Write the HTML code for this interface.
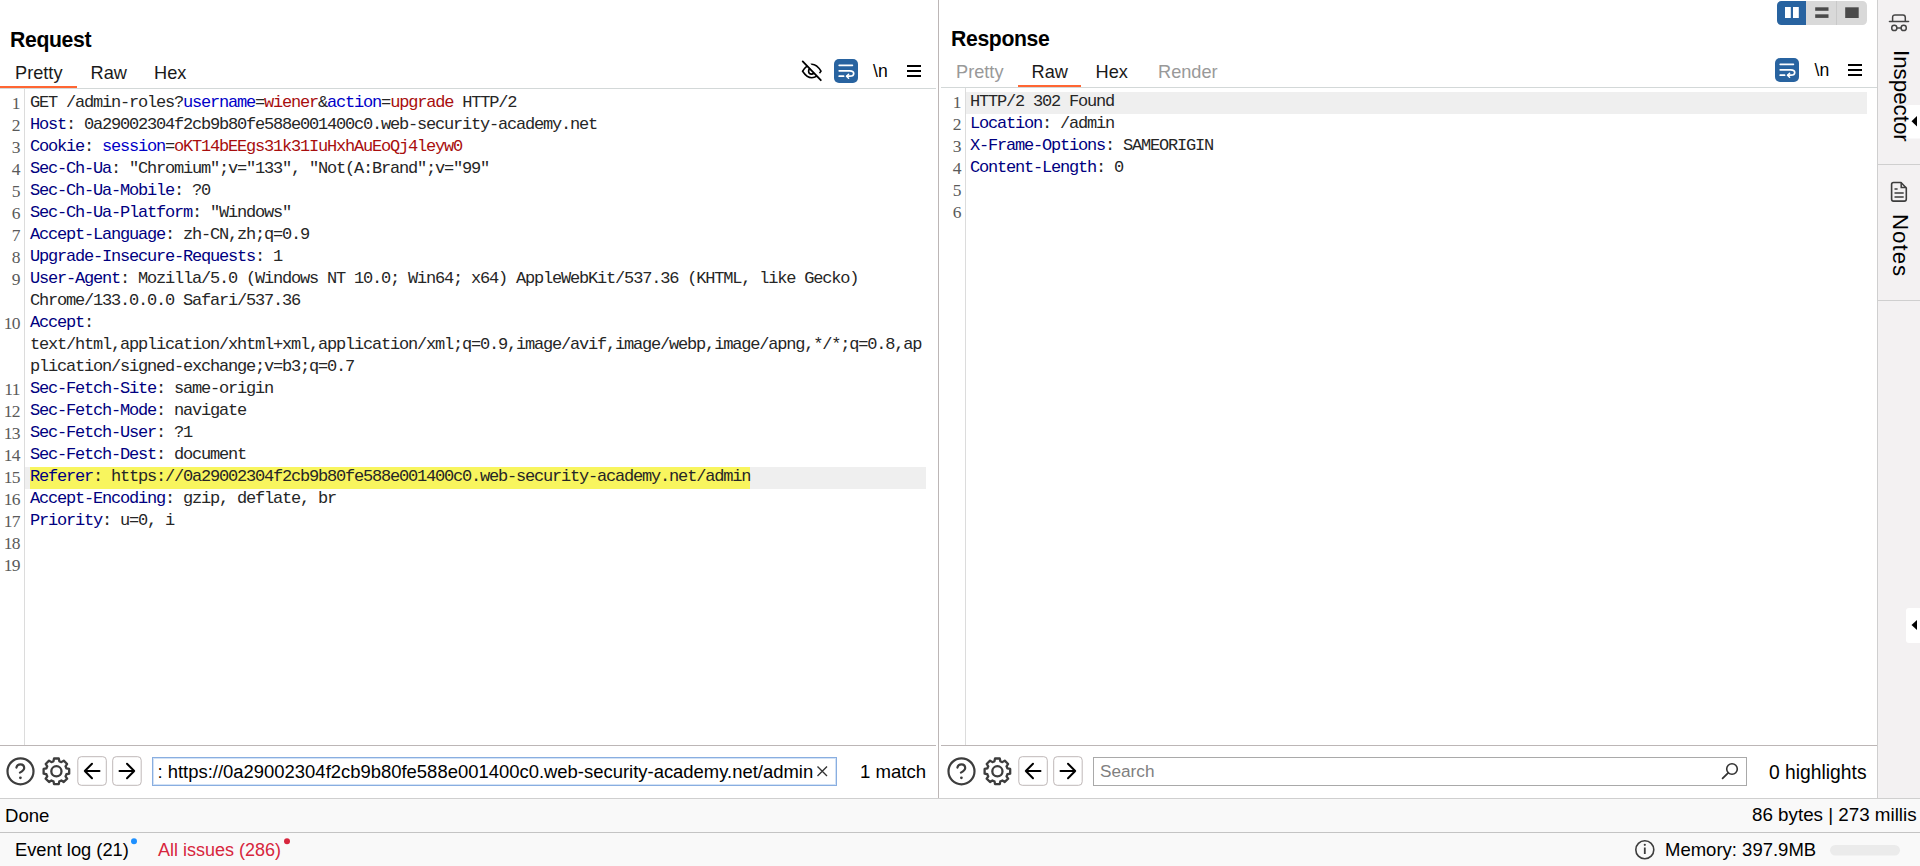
<!DOCTYPE html>
<html><head><meta charset="utf-8">
<style>
*{margin:0;padding:0;box-sizing:border-box}
html,body{width:1920px;height:866px;overflow:hidden;background:#fff;position:relative;font-family:"Liberation Sans",sans-serif;color:#000}
.a{position:absolute}
.t{position:absolute;white-space:pre;line-height:1}
.hd{font-weight:bold;font-size:21.2px;letter-spacing:-0.35px}
.tab{font-size:18.2px;color:#1a1a1a}
.tab.g{color:#999}
.code{position:absolute;font-family:"Liberation Mono",monospace;font-size:17px;letter-spacing:-1.2px;color:#262626}
.code div{height:22px;line-height:22px;white-space:pre}
.ln{position:absolute;font-family:"Liberation Serif",serif;font-size:17.5px;letter-spacing:-0.6px;color:#5a5a5a;text-align:right}
.ln div{height:22px;line-height:22px}
.h{color:#000080}
.b{color:#0000c8}
.r{color:#a80e0e}
.ui{font-size:18.6px}
</style></head><body>

<!-- LEFT PANEL -->
<div class="t hd" style="left:10px;top:29px">Request</div>
<div class="t tab" style="left:15px;top:64px">Pretty</div>
<div class="t tab" style="left:90.5px;top:64px">Raw</div>
<div class="t tab" style="left:154px;top:64px">Hex</div>
<div class="a" style="left:0;top:86px;width:77px;height:2px;background:#ff6633"></div>
<div class="a" style="left:0;top:88px;width:936px;height:1px;background:#d3d8d8"></div>
<div class="a" style="left:24px;top:89px;width:1px;height:656px;background:#dcdcdc"></div>

<!-- current line + highlight -->
<div class="a" style="left:25px;top:467px;width:901px;height:22px;background:#efefef"></div>
<div class="a" style="left:30px;top:467px;width:720px;height:22px;background:#f8f55e"></div>

<div class="ln" style="left:0;top:92px;width:20px">
<div>1</div><div>2</div><div>3</div><div>4</div><div>5</div><div>6</div><div>7</div><div>8</div><div>9</div><div></div><div>10</div><div></div><div></div><div>11</div><div>12</div><div>13</div><div>14</div><div>15</div><div>16</div><div>17</div><div>18</div><div>19</div>
</div>
<div class="code" style="left:30px;top:92px">
<div>GET /admin-roles?<span class="b">username</span>=<span class="r">wiener</span>&amp;<span class="b">action</span>=<span class="r">upgrade</span> HTTP/2</div>
<div><span class="h">Host</span>: 0a29002304f2cb9b80fe588e001400c0.web-security-academy.net</div>
<div><span class="h">Cookie</span>: <span class="b">session</span>=<span class="r">oKT14bEEgs31k31IuHxhAuEoQj4leyw0</span></div>
<div><span class="h">Sec-Ch-Ua</span>: "Chromium";v="133", "Not(A:Brand";v="99"</div>
<div><span class="h">Sec-Ch-Ua-Mobile</span>: ?0</div>
<div><span class="h">Sec-Ch-Ua-Platform</span>: "Windows"</div>
<div><span class="h">Accept-Language</span>: zh-CN,zh;q=0.9</div>
<div><span class="h">Upgrade-Insecure-Requests</span>: 1</div>
<div><span class="h">User-Agent</span>: Mozilla/5.0 (Windows NT 10.0; Win64; x64) AppleWebKit/537.36 (KHTML, like Gecko)</div>
<div>Chrome/133.0.0.0 Safari/537.36</div>
<div><span class="h">Accept</span>:</div>
<div>text/html,application/xhtml+xml,application/xml;q=0.9,image/avif,image/webp,image/apng,*/*;q=0.8,ap</div>
<div>plication/signed-exchange;v=b3;q=0.7</div>
<div><span class="h">Sec-Fetch-Site</span>: same-origin</div>
<div><span class="h">Sec-Fetch-Mode</span>: navigate</div>
<div><span class="h">Sec-Fetch-User</span>: ?1</div>
<div><span class="h">Sec-Fetch-Dest</span>: document</div>
<div><span class="h">Referer</span>: https://0a29002304f2cb9b80fe588e001400c0.web-security-academy.net/admin</div>
<div><span class="h">Accept-Encoding</span>: gzip, deflate, br</div>
<div><span class="h">Priority</span>: u=0, i</div>
</div>

<!-- divider -->
<div class="a" style="left:938px;top:0;width:1px;height:798px;background:#bcb6b6"></div>

<!-- RIGHT PANEL -->
<div class="t hd" style="left:951px;top:28px">Response</div>
<div class="t tab g" style="left:956px;top:63px">Pretty</div>
<div class="t tab" style="left:1031.5px;top:63px">Raw</div>
<div class="t tab" style="left:1095.5px;top:63px">Hex</div>
<div class="t tab g" style="left:1158px;top:63px">Render</div>
<div class="a" style="left:1018px;top:85px;width:63px;height:2px;background:#ff6633"></div>
<div class="a" style="left:941px;top:87px;width:936px;height:1px;background:#d3d8d8"></div>
<div class="a" style="left:965px;top:88px;width:1px;height:657px;background:#dcdcdc"></div>
<div class="a" style="left:966px;top:92px;width:901px;height:22px;background:#efefef"></div>

<div class="ln" style="left:941px;top:91px;width:20px">
<div>1</div><div>2</div><div>3</div><div>4</div><div>5</div><div>6</div>
</div>
<div class="code" style="left:970px;top:91px">
<div>HTTP/2 302 Found</div>
<div><span class="h">Location</span>: /admin</div>
<div><span class="h">X-Frame-Options</span>: SAMEORIGIN</div>
<div><span class="h">Content-Length</span>: 0</div>
</div>

<!-- SIDEBAR -->
<div class="a" style="left:1878px;top:0;width:42px;height:798px;background:#f3f1f2"></div>
<div class="a" style="left:1877px;top:0;width:1px;height:798px;background:#cfcfcf"></div>

<!-- BOTTOM SEARCH BARS -->
<div class="a" style="left:0;top:745px;width:936px;height:1px;background:#bcb6b6"></div>
<div class="a" style="left:941px;top:745px;width:936px;height:1px;background:#bcb6b6"></div>


<!-- bottom search bars svg -->
<svg class="a" style="left:0;top:0" width="1920" height="866" viewBox="0 0 1920 866">
<g>
<circle cx="20.5" cy="771.3" r="13" fill="none" stroke="#3d3d3d" stroke-width="2.2"/>
<path d="M16.4 767.6 C16.9 765.5 18.5 764.4 20.4 764.4 C22.6 764.4 24.2 765.9 24.2 768 C24.2 770.1 22.5 771.2 19.9 772.6" fill="none" stroke="#3d3d3d" stroke-width="2.2" stroke-linecap="round"/>
<circle cx="20.4" cy="777.8" r="1.4" fill="#3d3d3d"/>
<g transform="translate(56.4 771.3)"><path d="M-2.95 -9.97L-2.37 -12.78 L2.37 -12.78 L2.95 -9.97 A10.40 10.40 0 0 1 4.96 -9.14L7.36 -10.71 L10.71 -7.36 L9.14 -4.96 A10.40 10.40 0 0 1 9.97 -2.95L12.78 -2.37 L12.78 2.37 L9.97 2.95 A10.40 10.40 0 0 1 9.14 4.96L10.71 7.36 L7.36 10.71 L4.96 9.14 A10.40 10.40 0 0 1 2.95 9.97L2.37 12.78 L-2.37 12.78 L-2.95 9.97 A10.40 10.40 0 0 1 -4.96 9.14L-7.36 10.71 L-10.71 7.36 L-9.14 4.96 A10.40 10.40 0 0 1 -9.97 2.95L-12.78 2.37 L-12.78 -2.37 L-9.97 -2.95 A10.40 10.40 0 0 1 -9.14 -4.96L-10.71 -7.36 L-7.36 -10.71 L-4.96 -9.14 A10.40 10.40 0 0 1 -2.95 -9.97Z" fill="none" stroke="#3d3d3d" stroke-width="2.3" stroke-linejoin="round"/><circle r="5.1" fill="none" stroke="#3d3d3d" stroke-width="2.3"/></g>
<rect x="77.8" y="756.7" width="28.5" height="28.6" rx="3.5" fill="#fff" stroke="#bfb8b8" stroke-width="1"/>
<rect x="112.7" y="756.7" width="28.5" height="28.6" rx="3.5" fill="#fff" stroke="#bfb8b8" stroke-width="1"/>
<path d="M92 763.8 L84.8 771 L92 778.2 M84.8 771 H99.5" fill="none" stroke="#000" stroke-width="2" stroke-linecap="round" stroke-linejoin="round"/>
<path d="M127 763.8 L134.2 771 L127 778.2 M134.2 771 H119.5" fill="none" stroke="#000" stroke-width="2" stroke-linecap="round" stroke-linejoin="round"/>
</g>
<g transform="translate(941 0)"><g>
<circle cx="20.5" cy="771.3" r="13" fill="none" stroke="#3d3d3d" stroke-width="2.2"/>
<path d="M16.4 767.6 C16.9 765.5 18.5 764.4 20.4 764.4 C22.6 764.4 24.2 765.9 24.2 768 C24.2 770.1 22.5 771.2 19.9 772.6" fill="none" stroke="#3d3d3d" stroke-width="2.2" stroke-linecap="round"/>
<circle cx="20.4" cy="777.8" r="1.4" fill="#3d3d3d"/>
<g transform="translate(56.4 771.3)"><path d="M-2.95 -9.97L-2.37 -12.78 L2.37 -12.78 L2.95 -9.97 A10.40 10.40 0 0 1 4.96 -9.14L7.36 -10.71 L10.71 -7.36 L9.14 -4.96 A10.40 10.40 0 0 1 9.97 -2.95L12.78 -2.37 L12.78 2.37 L9.97 2.95 A10.40 10.40 0 0 1 9.14 4.96L10.71 7.36 L7.36 10.71 L4.96 9.14 A10.40 10.40 0 0 1 2.95 9.97L2.37 12.78 L-2.37 12.78 L-2.95 9.97 A10.40 10.40 0 0 1 -4.96 9.14L-7.36 10.71 L-10.71 7.36 L-9.14 4.96 A10.40 10.40 0 0 1 -9.97 2.95L-12.78 2.37 L-12.78 -2.37 L-9.97 -2.95 A10.40 10.40 0 0 1 -9.14 -4.96L-10.71 -7.36 L-7.36 -10.71 L-4.96 -9.14 A10.40 10.40 0 0 1 -2.95 -9.97Z" fill="none" stroke="#3d3d3d" stroke-width="2.3" stroke-linejoin="round"/><circle r="5.1" fill="none" stroke="#3d3d3d" stroke-width="2.3"/></g>
<rect x="77.8" y="756.7" width="28.5" height="28.6" rx="3.5" fill="#fff" stroke="#bfb8b8" stroke-width="1"/>
<rect x="112.7" y="756.7" width="28.5" height="28.6" rx="3.5" fill="#fff" stroke="#bfb8b8" stroke-width="1"/>
<path d="M92 763.8 L84.8 771 L92 778.2 M84.8 771 H99.5" fill="none" stroke="#000" stroke-width="2" stroke-linecap="round" stroke-linejoin="round"/>
<path d="M127 763.8 L134.2 771 L127 778.2 M134.2 771 H119.5" fill="none" stroke="#000" stroke-width="2" stroke-linecap="round" stroke-linejoin="round"/>
</g></g>
<!-- left input -->
<rect x="152.5" y="757.5" width="684" height="28" fill="#fff" stroke="#89aee0" stroke-width="1"/><rect x="153.5" y="758.5" width="682" height="26" fill="none" stroke="#d2e2f6" stroke-width="1"/>
<path d="M817.5 766.5 L827 776 M827 766.5 L817.5 776" stroke="#333" stroke-width="1.4"/>
<!-- right input -->
<rect x="1093.5" y="757.5" width="653" height="28" fill="#fff" stroke="#a9a9a9" stroke-width="1"/>
<circle cx="1732" cy="769" r="5.3" fill="none" stroke="#333" stroke-width="1.6"/>
<path d="M1728.2 772.8 L1722.6 778.4" stroke="#333" stroke-width="1.8" stroke-linecap="round"/>

<!-- left toolbar: eye slash -->
<path d="M802.6 71.2 C805.5 66.6 808.6 64.2 811.8 64.2 C815 64.2 818.3 66.6 821 71.2 C818.3 75.6 815 77.8 811.8 77.8 C808.6 77.8 805.5 75.6 802.6 71.2 Z" fill="none" stroke="#000" stroke-width="1.6"/>
<circle cx="811.5" cy="71.2" r="2.9" fill="none" stroke="#000" stroke-width="1.6"/>
<path d="M803.2 58.8 L823.5 80" stroke="#fff" stroke-width="3.6"/>
<path d="M802.7 61.4 L820.8 80.2" stroke="#000" stroke-width="1.8" stroke-linecap="round"/>
<!-- wrap button -->
<rect x="834" y="59" width="24" height="24" rx="5" fill="#2863a0"/>
<path d="M839.2 65.3 H852.4 M839.2 70.8 H849.8 C852.2 70.8 853.7 72 853.7 73.5 C853.7 75 852.2 76.2 849.8 76.2 H847 M839.2 76.2 H843.6" fill="none" stroke="#fff" stroke-width="1.7" stroke-linecap="round"/>
<path d="M848.6 74.2 L846.5 76.2 L848.6 78.2" fill="none" stroke="#fff" stroke-width="1.5" stroke-linecap="round" stroke-linejoin="round"/>
<!-- hamburger -->
<rect x="907" y="65" width="14" height="2" fill="#000"/><rect x="907" y="70" width="14" height="2" fill="#000"/><rect x="907" y="75" width="14" height="2" fill="#000"/>

<!-- right toolbar -->
<rect x="1775" y="58" width="24" height="24" rx="5" fill="#2863a0"/>
<path d="M1780.2 64.3 H1793.4 M1780.2 69.8 H1790.8 C1793.2 69.8 1794.7 71 1794.7 72.5 C1794.7 74 1793.2 75.2 1790.8 75.2 H1788 M1780.2 75.2 H1784.6" fill="none" stroke="#fff" stroke-width="1.7" stroke-linecap="round"/>
<path d="M1789.6 73.2 L1787.5 75.2 L1789.6 77.2" fill="none" stroke="#fff" stroke-width="1.5" stroke-linecap="round" stroke-linejoin="round"/>
<rect x="1848" y="64" width="14" height="2" fill="#000"/><rect x="1848" y="69" width="14" height="2" fill="#000"/><rect x="1848" y="74" width="14" height="2" fill="#000"/>

<!-- layout toggle -->
<rect x="1777" y="1" width="90" height="24" rx="4.5" fill="#d9d9d9"/>
<path d="M1781.5 1 H1806 V25 H1781.5 A4.5 4.5 0 0 1 1777 20.5 V5.5 A4.5 4.5 0 0 1 1781.5 1 Z" fill="#2863a0"/>
<rect x="1836" y="1" width="1" height="24" fill="#c9c9c9"/>
<rect x="1785" y="7" width="5.8" height="11" fill="#fff"/>
<rect x="1793" y="7" width="5.8" height="11" fill="#fff"/>
<rect x="1815.2" y="7.3" width="13.3" height="3.5" fill="#4a4a4a"/>
<rect x="1815.2" y="14.3" width="13.3" height="3.6" fill="#4a4a4a"/>
<rect x="1845.2" y="7.3" width="13.5" height="10.7" fill="#4a4a4a"/>
</svg>


<!-- toolbar text -->
<div class="t" style="left:873px;top:63px;font-size:17.6px">\n</div>
<div class="t" style="left:1814.5px;top:61.5px;font-size:17.6px">\n</div>
<!-- search texts -->
<div class="t ui" style="left:157.5px;top:763px;font-size:18.46px">: https://0a29002304f2cb9b80fe588e001400c0.web-security-academy.net/admin</div>
<div class="t ui" style="left:860px;top:763px">1 match</div>
<div class="t ui" style="left:1100px;top:763px;font-size:17.2px;color:#808080">Search</div>
<div class="t ui" style="left:1769px;top:763px;font-size:19.3px">0 highlights</div>
<!-- sidebar content -->
<svg class="a" style="left:1878px;top:0" width="42" height="798" viewBox="1878 0 42 798">
<path d="M1889.5 21.5 H1908.5" stroke="#444" stroke-width="1.6" stroke-linecap="round"/>
<path d="M1892.6 21.5 V17.5 C1892.6 15.8 1893.6 14.9 1895 14.9 H1903 C1904.4 14.9 1905.3 15.8 1905.3 17.5 V21.5" fill="none" stroke="#444" stroke-width="1.5"/>
<circle cx="1894.3" cy="27.9" r="2.6" fill="none" stroke="#444" stroke-width="1.5"/>
<circle cx="1903.7" cy="27.9" r="2.6" fill="none" stroke="#444" stroke-width="1.5"/>
<path d="M1896.9 28 H1901.1" stroke="#444" stroke-width="1.5"/>
<rect x="1878" y="164" width="42" height="1" fill="#cfcfcf"/>
<rect x="1878" y="300" width="42" height="1" fill="#cfcfcf"/>
<path d="M1893.5 182.5 H1901 L1906.3 188 V199 C1906.3 200.2 1905.5 201.1 1904.3 201.1 H1893.5 C1892.3 201.1 1891.6 200.2 1891.6 199 V184.5 C1891.6 183.3 1892.3 182.5 1893.5 182.5 Z" fill="none" stroke="#3d3d3d" stroke-width="1.6" stroke-linejoin="round"/>
<path d="M1901.2 182.5 V187.6 H1906.3" fill="none" stroke="#3d3d3d" stroke-width="1.5"/>
<path d="M1894.5 189 H1897.6 M1894.5 193 H1903.7 M1894.5 196.9 H1903.7" stroke="#3d3d3d" stroke-width="1.5"/>
<path d="M1906 108 A3 3 0 0 1 1909 105 H1920 V138.6 H1909 A3 3 0 0 1 1906 135.6 Z" fill="#fff"/>
<path d="M1917 116 L1911.5 121.3 L1917 126.5 Z" fill="#000"/>
<path d="M1906 611 A3 3 0 0 1 1909 608 H1920 V643 H1909 A3 3 0 0 1 1906 640 Z" fill="#fff"/>
<path d="M1917 620 L1911.5 625 L1917 630 Z" fill="#000"/>
</svg>
<div class="t" style="left:1891.5px;top:50px;font-size:22.3px;transform-origin:0 0;transform:translate(20px,0) rotate(90deg)">Inspector</div>
<div class="t" style="left:1891px;top:214px;font-size:22.3px;letter-spacing:1px;transform-origin:0 0;transform:translate(20px,0) rotate(90deg)">Notes</div>

<!-- STATUS BARS -->
<div class="a" style="left:0;top:798px;width:1920px;height:68px;background:#f9f9f9"></div>
<div class="a" style="left:0;top:798px;width:1920px;height:1px;background:#cfcfcf"></div>
<div class="a" style="left:0;top:832px;width:1920px;height:1px;background:#c4c4c4"></div>
<div class="t ui" style="left:5px;top:807px">Done</div>
<div class="t ui" style="left:1752px;top:806px;font-size:18.8px">86 bytes | 273 millis</div>
<div class="t ui" style="left:15px;top:841px;font-size:18.3px">Event log (21)</div>
<div class="t ui" style="left:158px;top:841px;font-size:18px;color:#d7263d">All issues (286)</div>
<div class="t ui" style="left:1665px;top:841px;font-size:18.5px">Memory: 397.9MB</div>


<svg class="a" style="left:0;top:798px" width="1920" height="68" viewBox="0 798 1920 68">
<circle cx="134" cy="841.3" r="3" fill="#1e90ff"/>
<circle cx="287" cy="841.3" r="3" fill="#d7263d"/>
<circle cx="1644.8" cy="849.7" r="9" fill="none" stroke="#3d3d3d" stroke-width="1.6"/>
<rect x="1643.9" y="847.5" width="1.8" height="6.5" fill="#3d3d3d"/>
<circle cx="1644.8" cy="844.8" r="1.1" fill="#3d3d3d"/>
<rect x="1830" y="845" width="70" height="10.6" rx="5.3" fill="#ebebeb"/>
</svg>
</body></html>
